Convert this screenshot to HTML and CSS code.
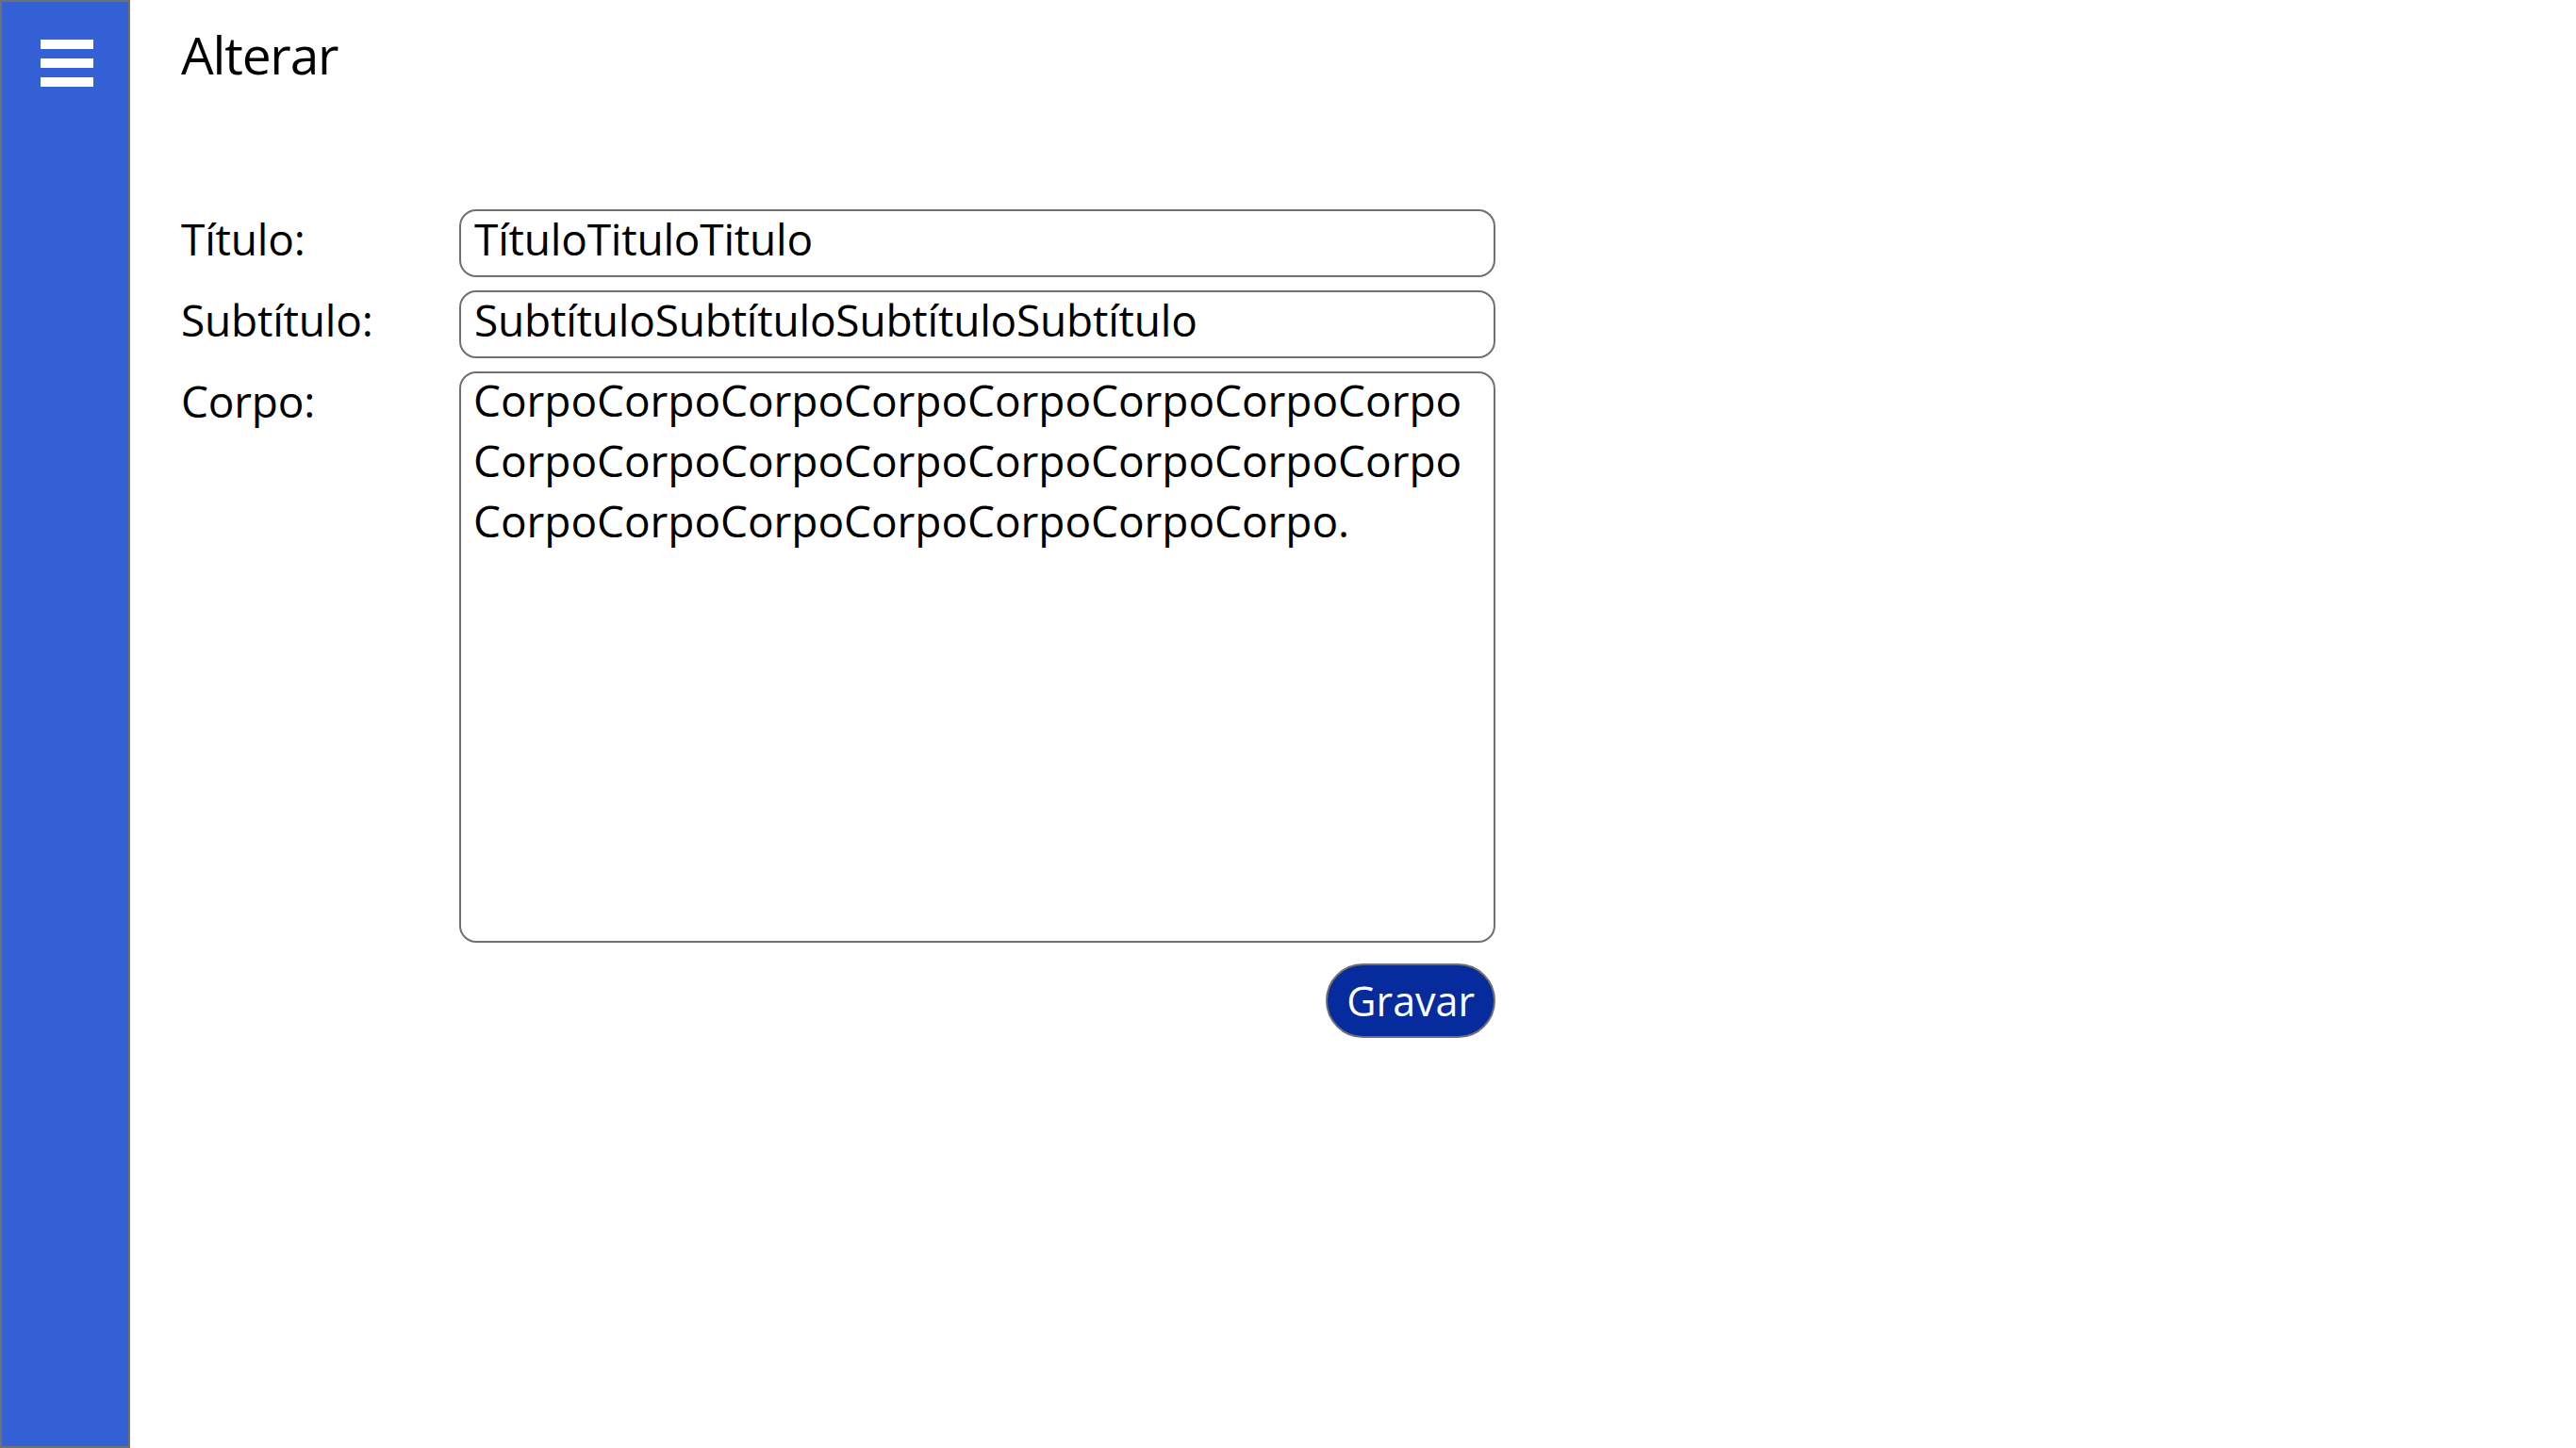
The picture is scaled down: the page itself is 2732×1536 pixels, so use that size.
FILE: index.html
```html
<!DOCTYPE html>
<html lang="pt">
<head>
<meta charset="utf-8">
<title>Alterar</title>
<link rel="stylesheet" href="styles.css">
</head>
<body>
<aside class="sidebar">
  <button class="menu-btn" type="button" aria-label="Menu">
    <svg width="56" height="50" viewBox="0 0 56 50"><rect x="0" y="0" width="56" height="10" fill="#fff"/><rect x="0" y="20" width="56" height="10" fill="#fff"/><rect x="0" y="40" width="56" height="10" fill="#fff"/></svg>
  </button>
</aside>
<main class="main">
  <h1 class="page-title">Alterar</h1>
  <form class="form">
    <label class="label" for="titulo">Título:</label>
    <input class="field" id="titulo" type="text" value="TítuloTituloTitulo">
    <label class="label" for="subtitulo">Subtítulo:</label>
    <input class="field" id="subtitulo" type="text" value="SubtítuloSubtítuloSubtítuloSubtítulo">
    <label class="label" for="corpo">Corpo:</label>
    <div class="area">
      <textarea class="area-input" id="corpo">CorpoCorpoCorpoCorpoCorpoCorpoCorpoCorpo
CorpoCorpoCorpoCorpoCorpoCorpoCorpoCorpo
CorpoCorpoCorpoCorpoCorpoCorpoCorpo.</textarea>
    </div>
    <div class="actions">
      <button class="save-btn" type="button">Gravar</button>
    </div>
  </form>
</main>
</body>
</html>
```
FILE: styles.css
```css
html, body {
  margin: 0;
  padding: 0;
  background: #ffffff;
}
body {
  display: flex;
  height: 1536px;
  font-family: "Open Sans", "Noto Sans", sans-serif;
  color: #000;
}
.sidebar {
  box-sizing: border-box;
  width: 138px;
  height: 1536px;
  flex: none;
  background: #3461d5;
  border: 2px solid #707070;
  padding: 40px 0 0 41px;
}
.menu-btn {
  display: block;
  border: 0;
  padding: 0;
  margin: 0;
  background: transparent;
  line-height: 0;
  cursor: pointer;
}
.main {
  flex: 1;
  padding: 30px 0 0 54px;
}
.page-title {
  margin: 0;
  font-size: 55px;
  line-height: 55px;
  font-weight: 400;
  letter-spacing: -1.2px;
}
.form {
  margin-top: 137px;
  display: grid;
  grid-template-columns: 295px 1099px;
  row-gap: 14px;
}
.label {
  font-size: 46px;
  line-height: 58px;
  padding-top: 2px;
  letter-spacing: -0.2px;
}
.field {
  box-sizing: border-box;
  width: 1099px;
  height: 72px;
  margin: 0;
  border: 2px solid #707070;
  border-radius: 18px;
  padding: 0 12px 10px 14px;
  font-family: "Open Sans", "Noto Sans", sans-serif;
  font-size: 46px;
  line-height: 58px;
  letter-spacing: -0.2px;
  color: #000;
  background: #fff;
  outline: none;
}
.area {
  box-sizing: border-box;
  width: 1099px;
  height: 606px;
  border: 2px solid #707070;
  border-radius: 18px;
  overflow: hidden;
  background: #fff;
}
.area-input {
  display: block;
  box-sizing: border-box;
  width: 100%;
  height: 606px;
  margin: -4px 0 0 0;
  border: 0;
  padding: 0 10px 0 13px;
  font-family: "Open Sans", "Noto Sans", sans-serif;
  font-size: 46px;
  line-height: 64px;
  letter-spacing: -0.05px;
  color: #000;
  background: transparent;
  resize: none;
  outline: none;
  overflow: hidden;
}
.actions {
  grid-column: 2;
  display: flex;
  justify-content: flex-end;
  margin-top: 8px;
}
.save-btn {
  box-sizing: border-box;
  height: 79px;
  padding: 0 20px;
  border: 2px solid #707070;
  border-radius: 40px;
  background: #052b9c;
  color: #fff;
  font-family: "Open Sans", "Noto Sans", sans-serif;
  font-size: 43px;
  line-height: 43px;
  cursor: pointer;
}
```
